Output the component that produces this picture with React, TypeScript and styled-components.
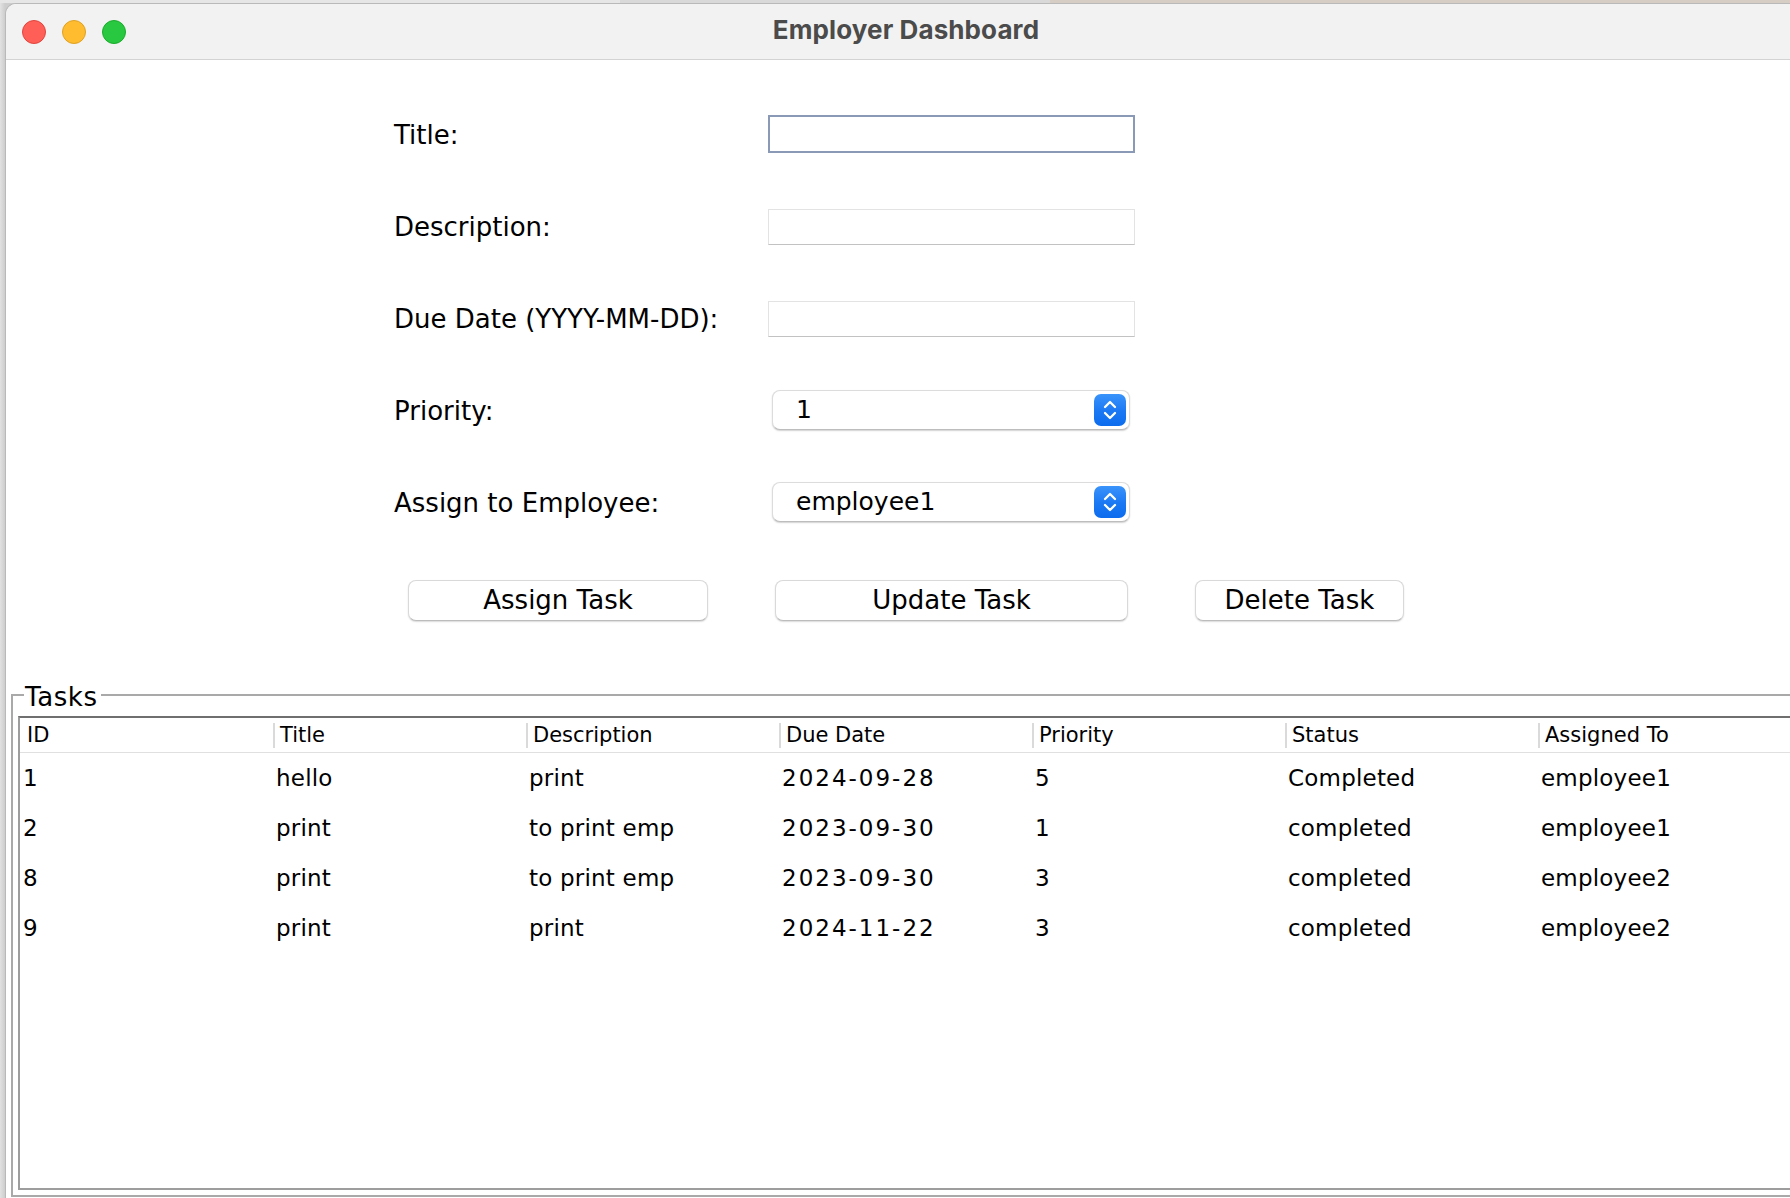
import React from "react";
import styled, { createGlobalStyle } from "styled-components";

const GlobalStyle = createGlobalStyle`
  html, body {
    margin: 0;
    padding: 0;
    width: 1790px;
    height: 1198px;
    overflow: hidden;
    background: #d3d3d3;
  }
  body {
    font-family: "DejaVu Sans", "Liberation Sans", sans-serif;
    color: #000;
  }
  #root {
    width: 1790px;
    height: 1198px;
  }
  * { box-sizing: border-box; }
`;

const Desktop = styled.div`
  width: 1790px;
  height: 1198px;
  overflow: hidden;
  display: flex;
  flex-direction: column;
  background: linear-gradient(90deg, #e2e2e2 0px, #cdcdcd 5px);
`;

const TopStrip = styled.div`
  height: 3px;
  flex: none;
  display: flex;
`;

const StripPart = styled.div<{ $w: string; $bg: string }>`
  width: ${(p) => p.$w};
  flex: ${(p) => (p.$w === "auto" ? "1" : "none")};
  background: ${(p) => p.$bg};
`;

const Window = styled.div`
  margin-left: 5px;
  width: 1802px;
  height: 1195px;
  flex: none;
  display: flex;
  flex-direction: column;
  background: #ffffff;
  border: 1px solid #b9b9b9;
  border-bottom: none;
  border-radius: 11px 11px 0 0;
  overflow: hidden;
`;

const TitleBar = styled.div`
  height: 56px;
  flex: none;
  display: grid;
  grid-template-columns: 1fr auto 1fr;
  align-items: center;
  background: #f2f2f2;
  border-bottom: 1px solid #d3d3d3;
`;

const Lights = styled.div`
  display: flex;
  gap: 16px;
  padding-left: 16px;
`;

const Light = styled.span<{ $fill: string; $edge: string }>`
  width: 24px;
  height: 24px;
  border-radius: 50%;
  background: ${(p) => p.$fill};
  border: 1px solid ${(p) => p.$edge};
`;

const WindowTitle = styled.div`
  font-family: Inter, "Liberation Sans", sans-serif;
  font-weight: 700;
  font-size: 26px;
  line-height: 30px;
  color: #4b4b4b;
  letter-spacing: 0.1px;
  padding-bottom: 3px;
`;

const Content = styled.div`
  flex: 1;
  display: flex;
  flex-direction: column;
  min-height: 0;
`;

const FormGrid = styled.div`
  display: grid;
  grid-template-columns: 374px 367px;
  grid-auto-rows: 92px;
  align-items: center;
  padding: 29px 0 0 388px;
`;

const Label = styled.label`
  font-size: 26px;
  line-height: 30px;
  color: #000;
`;

const TextField = styled.div<{ $focused?: boolean }>`
  width: 367px;
  height: ${(p) => (p.$focused ? "38px" : "36px")};
  background: #fff;
  border: ${(p) => (p.$focused ? "2px solid #8a9ab6" : "1px solid #e3e3e3")};
  border-bottom-color: ${(p) => (p.$focused ? "#8a9ab6" : "#c2c2c2")};
  margin-top: ${(p) => (p.$focused ? "-2px" : "0")};
`;

const Combo = styled.div`
  margin-left: 4px;
  margin-top: -3px;
  width: 358px;
  height: 40px;
  display: flex;
  align-items: center;
  justify-content: space-between;
  background: #fff;
  border: 1px solid #dcdcdc;
  border-bottom-color: #bdbdbd;
  border-radius: 8px;
  box-shadow: 0 1px 1.5px rgba(0, 0, 0, 0.18);
  padding: 0 3px 0 23px;
`;

const ComboValue = styled.span`
  font-size: 25px;
  line-height: 30px;
  padding-top: 1px;
  color: #000;
`;

const ComboArrow = styled.span`
  width: 32px;
  height: 32px;
  border-radius: 7px;
  background: linear-gradient(180deg, #3a93fb 0%, #1a78f3 55%, #0c6ced 100%);
  display: flex;
  align-items: center;
  justify-content: center;
`;

const ButtonRow = styled.div`
  display: flex;
  gap: 67px;
  padding-left: 402px;
  margin-top: 31px;
`;

const Button = styled.button<{ $w: number }>`
  width: ${(p) => p.$w}px;
  height: 41px;
  background: #fff;
  border: 1px solid #d9d9d9;
  border-bottom-color: #bcbcbc;
  border-radius: 8px;
  box-shadow: 0 1px 1.5px rgba(0, 0, 0, 0.15);
  font-family: "DejaVu Sans", "Liberation Sans", sans-serif;
  font-size: 26px;
  line-height: 30px;
  color: #000;
  padding: 0 0 1px;
  display: flex;
  align-items: center;
  justify-content: center;
`;

const TasksFieldset = styled.fieldset`
  flex: 1;
  min-height: 0;
  margin: 57px 0 1px 5px;
  padding: 4px 0 5px 5px;
  border: 2px solid #a9a9a9;
  border-right: none;
  display: flex;
  flex-direction: column;
`;

const Legend = styled.legend`
  font-size: 26px;
  line-height: 30px;
  letter-spacing: 0.6px;
  padding: 4px 3px 0 1px;
  margin-left: 6px;
  color: #000;
`;

const ScrollPane = styled.div`
  flex: 1;
  min-height: 0;
  height: 100%;
  border-top: 2px solid #6f6f6f;
  border-left: 2px solid #9d9d9d;
  border-bottom: 2px solid #9d9d9d;
  background: #fff;
`;

const HeaderRow = styled.div`
  display: grid;
  grid-template-columns: repeat(7, 253px);
  height: 35px;
  border-bottom: 1px solid #e0e0e0;
`;

const HeaderCell = styled.div<{ $first?: boolean }>`
  margin: 5px 0 4px;
  border-left: 2px solid ${(p) => (p.$first ? "transparent" : "#dadada")};
  padding-left: 5px;
  font-size: 21px;
  line-height: 25px;
  color: #000;
  white-space: nowrap;
`;

const BodyRow = styled.div`
  display: grid;
  grid-template-columns: repeat(7, 253px);
  height: 50px;
  align-items: center;
`;

const BodyCell = styled.div<{ $numeric?: boolean }>`
  padding-left: 3px;
  font-size: 23px;
  line-height: 30px;
  letter-spacing: ${(p) => (p.$numeric ? "2px" : "0.2px")};
  color: #000;
  white-space: nowrap;
`;

const Chevrons = () => (
  <svg width="18" height="24" viewBox="0 0 18 24" fill="none">
    <path d="M4 9 L9 4 L14 9" stroke="#fff" strokeWidth="2.3" strokeLinecap="round" strokeLinejoin="round" />
    <path d="M4 15 L9 20 L14 15" stroke="#fff" strokeWidth="2.3" strokeLinecap="round" strokeLinejoin="round" />
  </svg>
);

const columns = ["ID", "Title", "Description", "Due Date", "Priority", "Status", "Assigned To"];

const tasks = [
  ["1", "hello", "print", "2024-09-28", "5", "Completed", "employee1"],
  ["2", "print", "to print emp", "2023-09-30", "1", "completed", "employee1"],
  ["8", "print", "to print emp", "2023-09-30", "3", "completed", "employee2"],
  ["9", "print", "print", "2024-11-22", "3", "completed", "employee2"],
];

export default function App() {
  return (
    <>
      <GlobalStyle />
      <Desktop>
        <TopStrip>
          <StripPart $w="620px" $bg="#e6e6e6" />
          <StripPart $w="430px" $bg="#d9d9d9" />
          <StripPart $w="auto" $bg="#d6cec4" />
        </TopStrip>
        <Window>
          <TitleBar>
            <Lights>
              <Light $fill="#ff5f57" $edge="#e0443e" />
              <Light $fill="#febc2e" $edge="#dea123" />
              <Light $fill="#28c840" $edge="#1aac2c" />
            </Lights>
            <WindowTitle>Employer Dashboard</WindowTitle>
            <div />
          </TitleBar>
          <Content>
            <FormGrid>
              <Label>Title:</Label>
              <TextField $focused />
              <Label>Description:</Label>
              <TextField />
              <Label>Due Date (YYYY-MM-DD):</Label>
              <TextField />
              <Label>Priority:</Label>
              <Combo>
                <ComboValue>1</ComboValue>
                <ComboArrow>
                  <Chevrons />
                </ComboArrow>
              </Combo>
              <Label>Assign to Employee:</Label>
              <Combo>
                <ComboValue>employee1</ComboValue>
                <ComboArrow>
                  <Chevrons />
                </ComboArrow>
              </Combo>
            </FormGrid>
            <ButtonRow>
              <Button $w={300}>Assign Task</Button>
              <Button $w={353}>Update Task</Button>
              <Button $w={209}>Delete Task</Button>
            </ButtonRow>
            <TasksFieldset>
              <Legend>Tasks</Legend>
              <ScrollPane>
                <HeaderRow>
                  {columns.map((c, i) => (
                    <HeaderCell key={c} $first={i === 0}>
                      {c}
                    </HeaderCell>
                  ))}
                </HeaderRow>
                {tasks.map((row, r) => (
                  <BodyRow key={r}>
                    {row.map((v, i) => (
                      <BodyCell key={i} $numeric={i === 3}>
                        {v}
                      </BodyCell>
                    ))}
                  </BodyRow>
                ))}
              </ScrollPane>
            </TasksFieldset>
          </Content>
        </Window>
      </Desktop>
    </>
  );
}
